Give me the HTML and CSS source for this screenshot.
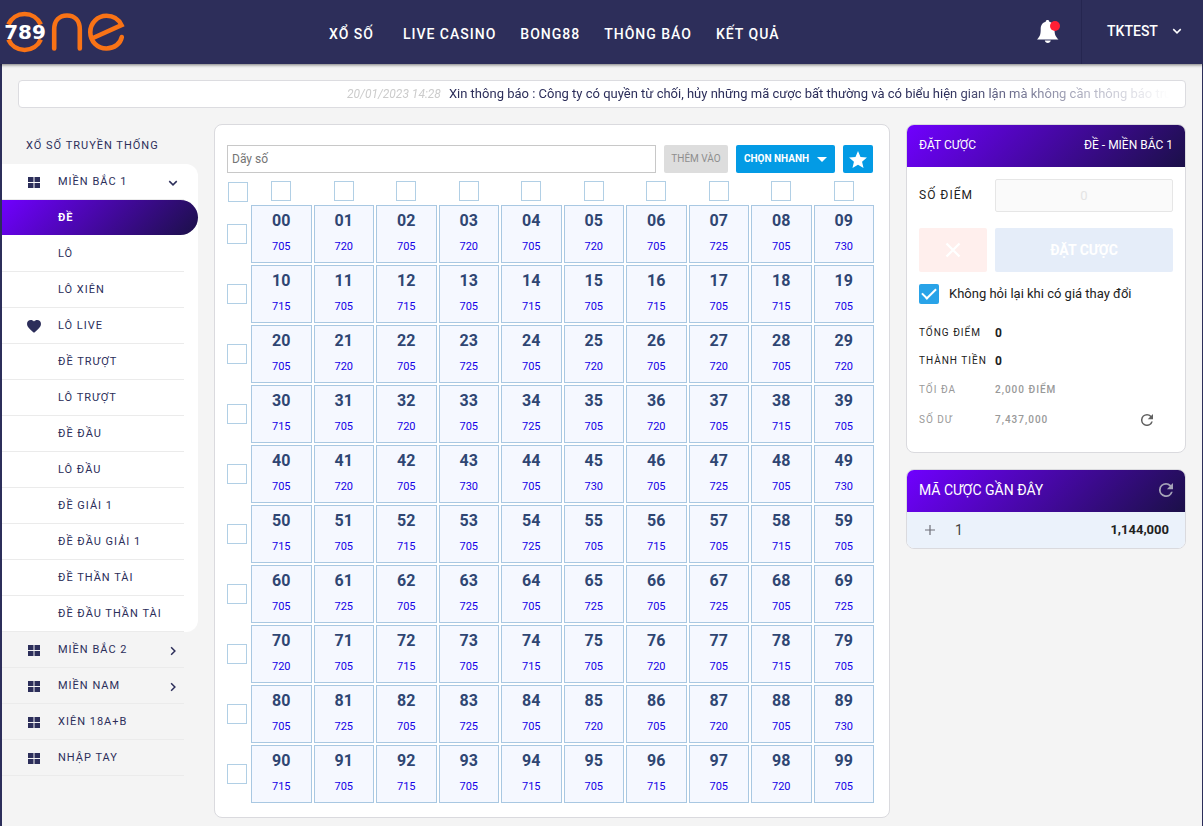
FILE: index.html
```html
<!DOCTYPE html>
<html lang="vi">
<head>
<meta charset="utf-8">
<meta name="viewport" content="width=device-width, initial-scale=1">
<title>789one - Đề Miền Bắc 1</title>
<link rel="stylesheet" href="styles.css">
</head>
<body>
<svg class="sprite" aria-hidden="true">
  <symbol id="i-grid" viewBox="0 0 12 11"><path d="M0 0h5.5v5H0zM6.5 0H12v5H6.5zM0 6h5.5v5H0zM6.5 6H12v5H6.5z"/></symbol>
  <symbol id="i-chevron" viewBox="0 0 8 8"><path d="M1 2.5 4 5.5 7 2.5" fill="none" stroke="currentColor" stroke-width="1.200"/></symbol>
  <symbol id="i-refresh" viewBox="4 4 16 16"><path d="M17.65 6.35A7.96 7.96 0 0 0 12 4a8 8 0 1 0 7.73 10h-2.08A6 6 0 1 1 12 6c1.66 0 3.14.69 4.22 1.78L13 11h7V4z"/></symbol>
</svg>
<header class="topbar">
  <a class="logo" href="#" aria-label="789one">
    <svg width="128" height="64" viewBox="0 0 128 64">
      <g fill="none" stroke="#f97316" stroke-width="4.6" stroke-linecap="round">
        <path stroke-linecap="butt" d="M8.400 24.500A17.700 17.700 0 0 1 40.800 24.500M8.400 39.500A17.700 17.700 0 0 0 40.800 39.500"/>
        <path d="M54.200 48.500V29.500C54.200 20.500 59.500 15.500 67 15.500S79.800 20.500 79.800 29.500V48.500"/>
        <path d="M93 38 121.500 25.200C118.500 19 113 15.800 106.500 15.800A16.200 16.200 0 0 0 90.300 32.200C90.300 41.500 97.500 48.500 106.500 48.500C114.500 48.500 120.500 43.500 121.800 37"/>
      </g>
      <text class="logo-num" x="25" y="39" text-anchor="middle">789</text>
    </svg>
  </a>
  <nav class="mainnav">
    <a href="#">XỔ SỐ</a><a href="#">LIVE CASINO</a><a href="#">BONG88</a><a href="#">THÔNG BÁO</a><a href="#">KẾT QUẢ</a>
  </nav>
  <button class="bell" aria-label="Thông báo">
    <svg width="24" height="26" viewBox="0 0 24 26"><path fill="#fff" d="M11.500 1c1 0 1.800.7 1.800 1.700C17 3.600 18.500 6.500 18.500 10c0 5.500 1 7.500 4 10.500H1C4 17.500 4.700 15.500 4.700 10c0-3.500 1.500-6.400 5-7.300 0-1 .8-1.700 1.800-1.700zM8.800 21.500h6c-.3 1.600-1.400 2.500-3 2.500s-2.700-.9-3-2.500z"/><circle cx="19" cy="7" r="5" fill="#ff1f35"/></svg>
  </button>
  <button class="account">TKTEST <svg width="10" height="10"><use href="#i-chevron"/></svg></button>
</header>

<div class="page">
  <div class="news">
    <p class="news-track"><time>20/01/2023 14:28</time>Xin thông báo : Công ty có quyền từ chối, hủy những mã cược bất thường và có biểu hiện gian lận mà không cần thông báo trước</p>
  </div>
  <div class="columns">
    <aside class="sidebar">
      <h2>XỔ SỐ TRUYỀN THỐNG</h2>
      <nav>
        <div class="group">
          <a class="item open" href="#"><svg class="ico"><use href="#i-grid"/></svg>MIỀN BẮC 1<svg class="arrow"><use href="#i-chevron"/></svg></a>
          <a class="item active" href="#">ĐỀ</a>
          <a class="item" href="#">LÔ</a>
          <a class="item" href="#">LÔ XIÊN</a>
          <a class="item" href="#"><svg class="ico heart" viewBox="2 3 20 18.500"><path d="M12 21.350 10.550 20.030C5.400 15.360 2 12.280 2 8.500 2 5.420 4.420 3 7.500 3c1.740 0 3.410.81 4.500 2.090C13.090 3.810 14.760 3 16.500 3 19.580 3 22 5.420 22 8.500c0 3.780-3.400 6.860-8.550 11.540z"/></svg>LÔ LIVE</a>
          <a class="item" href="#">ĐỀ TRƯỢT</a>
          <a class="item" href="#">LÔ TRƯỢT</a>
          <a class="item" href="#">ĐỀ ĐẦU</a>
          <a class="item" href="#">LÔ ĐẦU</a>
          <a class="item" href="#">ĐỀ GIẢI 1</a>
          <a class="item" href="#">ĐỀ ĐẦU GIẢI 1</a>
          <a class="item" href="#">ĐỀ THẦN TÀI</a>
          <a class="item" href="#">ĐỀ ĐẦU THẦN TÀI</a>
        </div>
        <a class="item" href="#"><svg class="ico"><use href="#i-grid"/></svg>MIỀN BẮC 2<svg class="arrow right"><use href="#i-chevron"/></svg></a>
        <a class="item" href="#"><svg class="ico"><use href="#i-grid"/></svg>MIỀN NAM<svg class="arrow right"><use href="#i-chevron"/></svg></a>
        <a class="item" href="#"><svg class="ico"><use href="#i-grid"/></svg>XIÊN 18A+B</a>
        <a class="item" href="#"><svg class="ico"><use href="#i-grid"/></svg>NHẬP TAY</a>
      </nav>
    </aside>

    <main class="card board">
      <div class="toolbar">
        <input class="numbers" type="text" placeholder="Dãy số" aria-label="Dãy số">
        <button class="add" disabled>THÊM VÀO</button>
        <button class="quick">CHỌN NHANH <svg width="10" height="5" viewBox="0 0 10 5"><path d="M0 0h10L5 5z"/></svg></button>
        <button class="star" aria-label="Yêu thích"><svg width="18" height="17" viewBox="2 2 20 19"><path d="m12 17.270 6.180 3.730-1.640-7.030L22 9.240l-7.190-.61L12 2 9.190 8.630 2 9.240l5.460 4.730L5.820 21z"/></svg></button>
      </div>
      <div class="grid" id="grid"></div>
    </main>

    <aside class="side">
      <section class="card">
        <header class="card-head"><h2>ĐẶT CƯỢC</h2><span>ĐỀ - MIỀN BẮC 1</span></header>
        <form class="bet">
          <label class="points-label" for="points">SỐ ĐIỂM</label>
          <input class="points" id="points" type="text" placeholder="0" disabled>
          <button class="clear" type="button" aria-label="Xóa" disabled><svg width="16" height="16" viewBox="0 0 16 16"><path d="m1.500 1.500 13 13m0-13-13 13" stroke="#fff" stroke-width="2.200"/></svg></button>
          <button class="submit" type="button" disabled>ĐẶT CƯỢC</button>
          <label class="confirm"><input class="tick" type="checkbox" checked>Không hỏi lại khi có giá thay đổi</label>
        </form>
        <dl class="totals">
          <dt>TỔNG ĐIỂM</dt><dd>0</dd>
          <dt>THÀNH TIỀN</dt><dd>0</dd>
        </dl>
        <dl class="limits">
          <dt>TỐI ĐA</dt><dd>2,000 ĐIỂM</dd>
          <dt>SỐ DƯ</dt><dd>7,437,000 <button class="reload" aria-label="Tải lại số dư"><svg width="12" height="12"><use href="#i-refresh"/></svg></button></dd>
        </dl>
      </section>
      <section class="card">
        <header class="card-head recent-head"><h2>MÃ CƯỢC GẦN ĐÂY</h2><button class="reload light" aria-label="Tải lại"><svg width="14" height="14"><use href="#i-refresh"/></svg></button></header>
        <div class="recent">
          <button class="expand" aria-label="Mở rộng"><svg width="10" height="10" viewBox="0 0 10 10"><path d="M5 0v10M0 5h10" stroke="#6e6e78" stroke-width="1.200"/></svg></button>
          <span>1</span><strong>1,144,000</strong>
        </div>
      </section>
    </aside>
  </div>
</div>
<script src="board.js"></script>
</body>
</html>
```
FILE: board.js
```js
const odds = [
  [705, 720, 705, 720, 705, 720, 705, 725, 705, 730],
  [715, 705, 715, 705, 715, 705, 715, 705, 715, 705],
  [705, 720, 705, 725, 705, 720, 705, 720, 705, 720],
  [715, 705, 720, 705, 725, 705, 720, 705, 715, 705],
  [705, 720, 705, 730, 705, 730, 705, 725, 705, 730],
  [715, 705, 715, 705, 725, 705, 715, 705, 715, 705],
  [705, 725, 705, 725, 705, 725, 705, 725, 705, 725],
  [720, 705, 715, 705, 715, 705, 720, 705, 715, 705],
  [705, 725, 705, 725, 705, 720, 705, 720, 705, 730],
  [715, 705, 715, 705, 715, 705, 715, 705, 720, 705]
];
const box = label => `<input class="pick" type="checkbox" aria-label="${label}">`;
let html = box("Chọn tất cả");
for (let c = 0; c < 10; c++) html += box(`Cột ${c}`);
odds.forEach((row, r) => {
  html += box(`Hàng ${r}`);
  row.forEach((odd, c) => {
    html += `<button class="num"><b>${r}${c}</b><span>${odd}</span></button>`;
  });
});
document.getElementById("grid").innerHTML = html;
```
FILE: styles.css
```css
* { box-sizing: border-box; }
body {
  margin: 0;
  background: #f4f4f4;
  color: #2c2e5a;
  font: 13px/20px Roboto, "Noto Sans", sans-serif;
}
h2, p, dl, dd { margin: 0; }
a { color: inherit; text-decoration: none; }
button, input { font: inherit; color: inherit; margin: 0; }
button { border: 0; padding: 0; background: none; display: flex; align-items: center; justify-content: center; }
svg { fill: currentColor; flex: none; }
.sprite { position: absolute; width: 0; height: 0; }

.topbar {
  position: relative;
  display: flex;
  height: 64px;
  background: #2d2e5a;
  color: #fff;
  box-shadow: 0 1px 3px rgba(0, 0, 0, .5);
}
.logo { width: 329px; }
.logo svg { display: block; }
.logo-num { fill: #fff; font: bold 20px "DejaVu Sans", sans-serif; }
.mainnav {
  flex: 1;
  display: flex;
  align-items: center;
  gap: 24px;
  padding-top: 4px;
  font-size: 14px;
  font-weight: 500;
  letter-spacing: 1px;
  white-space: nowrap;
}
.mainnav a:first-child { margin-right: 5px; }
.bell { width: 66px; }
.account {
  width: 122px;
  gap: 14px;
  padding-left: 4px;
  padding-bottom: 2px;
  border-left: 1px solid #252650;
  font-size: 14px;
  font-weight: 500;
}

.page {
  min-height: calc(100vh - 64px);
  padding: 16px 16px 8px 0;
  border: solid #2c2e5a;
  border-width: 0 1px 0 2px;
}
.news {
  margin-left: 16px;
  padding: 0 16px;
  height: 28px;
  background: #fff;
  border: 1px solid #dcdce0;
  border-radius: 4px;
}
.news-track {
  padding-left: 312px;
  overflow: hidden;
  white-space: nowrap;
  line-height: 26px;
  -webkit-mask-image: linear-gradient(90deg, #000 80%, transparent);
  mask-image: linear-gradient(90deg, #000 80%, transparent);
}
.news time { margin-right: 8px; color: #ccc; font-size: 12px; font-style: italic; }

.columns { display: flex; align-items: flex-start; gap: 16px; margin-top: 16px; }

.sidebar { flex: none; width: 196px; font-size: 11px; font-weight: 400; letter-spacing: 1px; }
.sidebar h2 { padding: 12px 24px 8px; font-size: 11px; font-weight: 400; white-space: nowrap; }
.group { background: #fff; border-radius: 0 12px 12px 0; }
.item { position: relative; display: flex; align-items: center; height: 36px; padding: 0 20px 0 56px; white-space: nowrap; }
.item::after { content: ""; position: absolute; left: 0; right: 14px; bottom: 0; border-bottom: 1px solid #ebebeb; }
.item.active {
  height: 35px;
  margin-bottom: 1px;
  border-radius: 0 18px 18px 0;
  background: linear-gradient(135deg, #7000ff, #1b1048);
  color: #fff;
  font-weight: 700;
}
.item.active::after { display: none; }
.ico { width: 12px; height: 11px; margin: 1px 18px 0 -30px; }
.heart { width: 14px; height: 13px; margin: 1px 17px 0 -31px; }
.arrow { width: 10px; height: 10px; margin: 1px 0 0 auto; }
.arrow.right { transform: rotate(-90deg); }

.card { border: 1px solid #dadade; border-radius: 8px; background: #fff; overflow: hidden; }
.board { flex: 1; min-width: 0; padding: 20px 15px 14px 12px; }
.toolbar { display: flex; gap: 8px; height: 28px; margin-right: 1px; }
.numbers { flex: 1; min-width: 0; padding: 0 4px; border: 1px solid #c8c8c8; font-size: 12px; }
.numbers::placeholder { color: #757575; }
.toolbar button { border-radius: 2px; font-size: 10px; white-space: nowrap; }
.add { width: 64px; background: #ddd; color: #8e8e8e; }
.quick { width: 99px; gap: 8px; background: #039be5; color: #fff; font-weight: 700; }
.star { width: 30px; background: #039be5; color: #fff; }

.grid {
  display: grid;
  grid-template-columns: 22px repeat(10, 1fr);
  grid-template-rows: 22px;
  grid-auto-rows: 58px;
  gap: 2px;
  margin-top: 8px;
  align-items: center;
  justify-items: center;
}
.pick { appearance: none; width: 20px; height: 20px; border: 1px solid #b1cfe5; background: #fff; }
.grid > .pick:nth-child(-n + 11) { align-self: start; }
.grid > .pick:first-child { align-self: center; }
.grid > .pick:nth-child(n + 12) { justify-self: start; }
.num {
  width: 100%;
  height: 58px;
  flex-direction: column;
  gap: 6px;
  border: 1px solid #a9c8e2;
  background: #f5f8ff;
}
.num b { color: #2f4673; font-size: 16px; font-weight: 700; line-height: 20px; }
.num span { color: #1400e6; font-size: 11px; line-height: 20px; }

.side { flex: none; width: 280px; display: grid; gap: 16px; color: #212121; }
.card-head {
  display: flex;
  align-items: center;
  justify-content: space-between;
  height: 42px;
  padding: 0 12px 2px;
  background: linear-gradient(135deg, #7000ff, #1b1048);
  color: #fff;
  font-size: 12px;
}
.card-head h2 { font-size: 12px; font-weight: 400; }
.recent-head h2 { font-size: 14px; }
.bet {
  display: grid;
  grid-template-columns: 68px 1fr;
  gap: 16px 8px;
  padding: 12px 12px 0;
}
.bet > * { min-width: 0; }
.points-label { font-size: 12px; letter-spacing: 1px; line-height: 32px; white-space: nowrap; }
.points { height: 33px; padding: 0; border: 1px solid #e6e6e6; border-radius: 2px; background: #fafafa; text-align: center; }
.points::placeholder { color: #e4e4e4; }
.clear, .submit { height: 44px; border-radius: 2px; color: #fff; font-size: 14px; font-weight: 700; }
.clear { background: #ffefed; }
.submit { background: #e5edf9; }
.confirm { grid-column: 1 / -1; display: flex; align-items: center; gap: 10px; margin-top: -4px; }
.tick {
  appearance: none;
  width: 20px;
  height: 20px;
  border-radius: 2px;
  display: grid;
  place-items: center;
  background: #29a3e8;
}
.tick::before { content: ""; width: 12px; height: 6px; margin-bottom: 4px; border: solid #fff; border-width: 0 0 2px 2px; transform: rotate(-45deg); }
.totals, .limits { display: grid; grid-template-columns: 68px 1fr; column-gap: 8px; padding: 0 12px; letter-spacing: 1px; white-space: nowrap; }
.totals { margin-top: 15px; line-height: 28px; font-size: 10px; }
.totals dd { font-size: 12px; font-weight: 700; }
.limits { line-height: 30px; padding-bottom: 17px; font-size: 10px; color: #999; }
.limits dt { font-weight: 400; }
.limits dd { display: flex; justify-content: space-between; font-weight: 500; }
.reload { color: #616161; }
.limits .reload { margin-right: 20px; }
.reload.light { color: #a5a3b8; }
.recent { display: flex; align-items: center; height: 36px; padding: 0 16px 0 18px; background: #ebf2fb; }
.expand { width: 10px; margin-right: 20px; }
.recent span { font-size: 14px; color: #424242; }
.recent strong { margin-left: auto; font-size: 13px; font-weight: 700; }
```
